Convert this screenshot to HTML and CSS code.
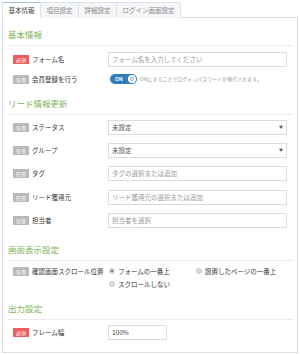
FILE: index.html
```html
<!DOCTYPE html>
<html lang="ja">
<head>
<meta charset="utf-8">
<link rel="stylesheet" href="styles.css">
</head>
<body>
<div class="tabs">
  <div class="tab active">基本情報</div>
  <div class="tab">項目設定</div>
  <div class="tab">詳細設定</div>
  <div class="tab">ログイン画面設定</div>
</div>
<div class="panel">
  <div class="section">
    <div class="heading">基本情報</div>
    <div class="rows rows-basic">
      <div class="row">
        <div class="label"><span class="badge req">必須</span>フォーム名</div>
        <div class="input placeholder">フォーム名を入力してください</div>
      </div>
      <div class="row row-toggle">
        <div class="label"><span class="badge opt">任意</span>会員登録を行う</div>
        <div class="toggle-wrap">
          <span class="toggle"><span class="toggle-text">ON</span><span class="knob"></span></span>
          <span class="hint">ONにすることでログインパスワードが発行されます。</span>
        </div>
      </div>
    </div>
  </div>
  <div class="section">
    <div class="heading">リード情報更新</div>
    <div class="rows rows-lead">
      <div class="row">
        <div class="label"><span class="badge opt">任意</span>ステータス</div>
        <div class="input select">未設定<span class="caret">▼</span></div>
      </div>
      <div class="row">
        <div class="label"><span class="badge opt">任意</span>グループ</div>
        <div class="input select">未設定<span class="caret">▼</span></div>
      </div>
      <div class="row">
        <div class="label"><span class="badge opt">任意</span>タグ</div>
        <div class="input placeholder">タグの選択または追加</div>
      </div>
      <div class="row">
        <div class="label"><span class="badge opt">任意</span>リード獲得元</div>
        <div class="input placeholder">リード獲得元の選択または追加</div>
      </div>
      <div class="row">
        <div class="label"><span class="badge opt">任意</span>担当者</div>
        <div class="input placeholder">担当者を選択</div>
      </div>
    </div>
  </div>
  <div class="section section-display">
    <div class="heading">画面表示設定</div>
    <div class="rows rows-display">
      <div class="row row-radio">
        <div class="label"><span class="badge opt">任意</span>確認画面スクロール位置</div>
        <div class="radios">
          <label class="radio"><span class="dot checked"></span>フォームの一番上</label>
          <label class="radio"><span class="dot"></span>設置したページの一番上</label>
          <label class="radio"><span class="dot"></span>スクロールしない</label>
        </div>
      </div>
    </div>
  </div>
  <div class="section section-output">
    <div class="heading">出力設定</div>
    <div class="rows rows-output">
      <div class="row">
        <div class="label"><span class="badge req">必須</span>フレーム幅</div>
        <div class="input short">100%</div>
      </div>
    </div>
  </div>
</div>
</body>
</html>
```

FILE: styles.css
```css
* { box-sizing: border-box; }
html, body { margin: 0; padding: 0; background: #fff; }
body {
  width: 300px;
  height: 354px;
  padding: 2px 2px 0 2px;
  font-family: "Noto Sans CJK JP", "Noto Sans", sans-serif;
  color: #333;
  overflow: hidden;
}
.tabs {
  display: flex;
  height: 15px;
  position: relative;
  z-index: 1;
}
.tab {
  height: 16px;
  padding: 0 5.5px;
  font-size: 6.5px;
  line-height: 14px;
  color: #888;
  background: #f5f6f8;
  border: 1px solid #dbe2ec;
  border-bottom: none;
  margin-right: -1px;
}
.tab.active {
  background: #fff;
  color: #444;
  border-top-color: #a8c4e4;
}
.panel {
  border: 1px solid #d8dfea;
  height: 336px;
  padding: 0 4px 0 5px;
  background: #fff;
}
.heading {
  font-size: 8.5px;
  line-height: 12px;
  color: #7db65a;
  padding-top: 10px;
  padding-bottom: 5px;
  border-bottom: 1px solid #ececec;
}
.section + .section .heading { padding-top: 12px; }
.section.section-display .heading { padding-top: 15px; }
.section.section-output .heading { padding-top: 13px; }
.rows {
  display: flex;
  flex-direction: column;
  gap: 8px;
  padding: 6px 6px 0 5px;
}
.rows-lead { padding-top: 5px; gap: 8.2px; }
.rows-display { padding-top: 6px; }
.rows-output { padding-top: 5px; }
.row {
  display: flex;
  align-items: center;
  min-height: 15px;
}
.row-toggle { min-height: 12px; margin-top: -2px; }
.row-radio { align-items: flex-start; }
.label {
  width: 95px;
  flex: none;
  display: flex;
  align-items: center;
  font-size: 6.5px;
  line-height: 9px;
  color: #333;
}
.badge {
  display: inline-block;
  width: 16px;
  height: 9px;
  font-size: 5px;
  line-height: 9px;
  text-align: center;
  color: #fff;
  margin-right: 3px;
}
.badge.req { background: #ee5d5b; }
.badge.opt { background: #b9b9b9; }
.input {
  flex: 1;
  height: 15px;
  border: 1px solid #dcdcdc;
  font-size: 6.5px;
  line-height: 13px;
  padding-left: 3px;
  color: #444;
  background: #fff;
  position: relative;
}
.input.placeholder { color: #9a9a9a; }
.input.select { color: #555; }
.input.short { flex: none; width: 59px; }
.caret {
  position: absolute;
  right: 3px;
  top: 0;
  font-size: 4px;
  color: #555;
}
.toggle-wrap {
  display: flex;
  align-items: center;
  gap: 3px;
  padding-left: 2px;
}
.toggle {
  display: inline-flex;
  align-items: center;
  justify-content: space-between;
  width: 27px;
  height: 10px;
  border-radius: 5px;
  background: #2f7cbf;
  padding: 0 1px 0 5px;
}
.toggle-text {
  font-size: 5px;
  font-weight: bold;
  color: #fff;
  line-height: 10px;
  font-family: "Liberation Sans", sans-serif;
}
.knob {
  width: 8px;
  height: 8px;
  border-radius: 50%;
  background: #fff;
  position: relative;
}
.knob::after {
  content: "";
  position: absolute;
  left: 2px;
  top: 2px;
  width: 4px;
  height: 4px;
  border-radius: 50%;
  border: 1px solid #9aa8b8;
  box-sizing: border-box;
}
.hint {
  font-size: 5px;
  color: #999;
  line-height: 8px;
  white-space: nowrap;
}
.radios {
  flex: 1;
  display: grid;
  grid-template-columns: 87px 1fr;
  row-gap: 4px;
  padding-left: 1px;
}
.radio {
  display: flex;
  align-items: center;
  font-size: 6.5px;
  line-height: 9px;
  color: #333;
  white-space: nowrap;
}
.dot {
  width: 6px;
  height: 6px;
  border-radius: 50%;
  background: #ddd;
  border: 1px solid #c8c8c8;
  margin-right: 3px;
  position: relative;
  flex: none;
}
.dot.checked::after {
  content: "";
  position: absolute;
  left: 1px;
  top: 1px;
  width: 2px;
  height: 2px;
  border-radius: 50%;
  background: #555;
}
```
